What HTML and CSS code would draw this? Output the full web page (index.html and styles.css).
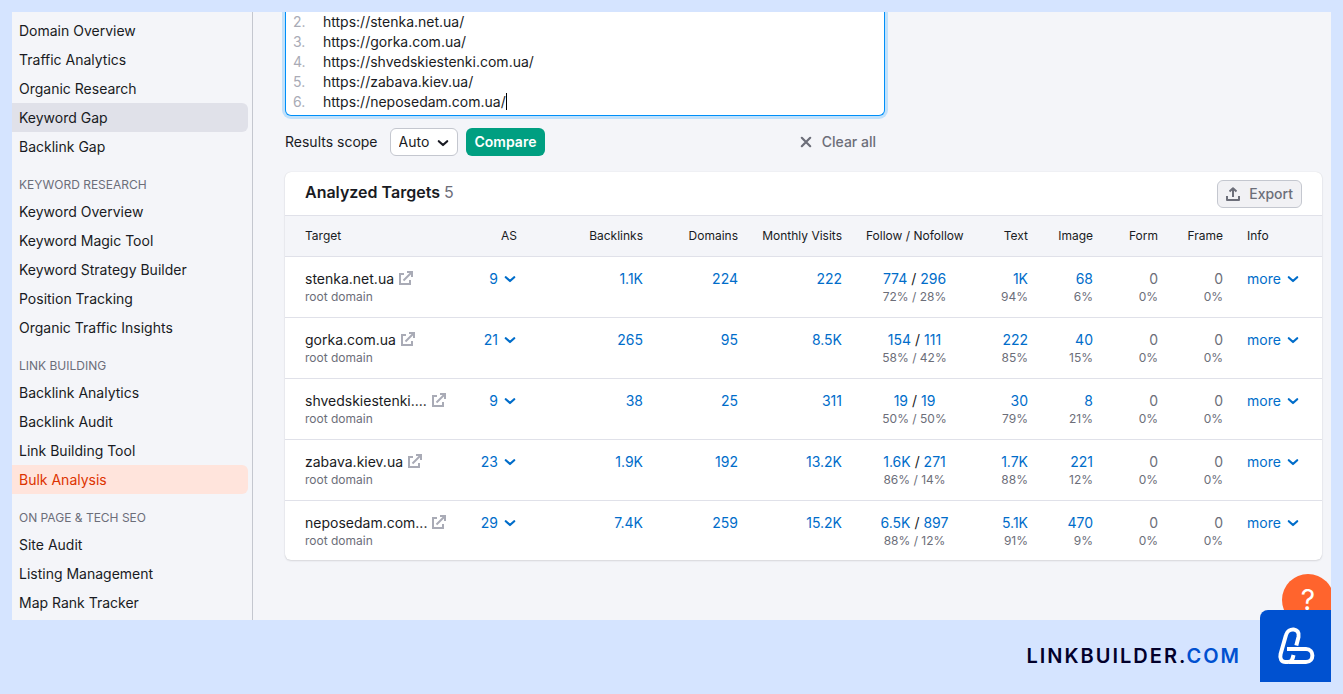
FILE: index.html
```html
<!DOCTYPE html>
<html lang="en">
<head>
  <meta charset="UTF-8" />
  <meta name="viewport" content="width=device-width, initial-scale=1.0"/>
  <title>Bulk Analysis</title>
  <link rel="stylesheet" href="styles.css">
</head>
<body>

  <!-- shared icons -->
  <svg class="sprite" aria-hidden="true">
    <symbol id="chevron" viewBox="0 0 12 8">
      <path d="M1.8 2.2 6 6 10.2 2.2" fill="none" stroke="currentColor" stroke-width="2.2" stroke-linecap="round" stroke-linejoin="round"/>
    </symbol>
    <symbol id="external" viewBox="0 0 14 14">
      <path d="M5 3H1V13h10V9" fill="none" stroke="currentColor" stroke-width="2"/>
      <path d="M4.5 9.500 12 2" fill="none" stroke="currentColor" stroke-width="2"/>
      <path d="M8 1H13V6" fill="none" stroke="currentColor" stroke-width="2"/>
    </symbol>
  </svg>

  <div class="frame">
    <nav class="sidebar">
      <ul>
        <li><a href="#">Domain Overview</a></li>
        <li><a href="#">Traffic Analytics</a></li>
        <li><a href="#">Organic Research</a></li>
        <li><a href="#" class="hovered">Keyword Gap</a></li>
        <li><a href="#">Backlink Gap</a></li>
      </ul>
      <h3>KEYWORD RESEARCH</h3>
      <ul>
        <li><a href="#">Keyword Overview</a></li>
        <li><a href="#">Keyword Magic Tool</a></li>
        <li><a href="#">Keyword Strategy Builder</a></li>
        <li><a href="#">Position Tracking</a></li>
        <li><a href="#">Organic Traffic Insights</a></li>
      </ul>
      <h3>LINK BUILDING</h3>
      <ul>
        <li><a href="#">Backlink Analytics</a></li>
        <li><a href="#">Backlink Audit</a></li>
        <li><a href="#">Link Building Tool</a></li>
        <li><a href="#" class="active">Bulk Analysis</a></li>
      </ul>
      <h3>ON PAGE &amp; TECH SEO</h3>
      <ul>
        <li><a href="#">Site Audit</a></li>
        <li><a href="#">Listing Management</a></li>
        <li><a href="#">Map Rank Tracker</a></li>
      </ul>
    </nav>

    <main class="content">
      <form class="targets-form" onsubmit="return false">
        <div class="url-box">
          <div class="line-numbers"><span>2.</span><span>3.</span><span>4.</span><span>5.</span><span>6.</span></div>
          <textarea rows="5" aria-label="Targets" spellcheck="false">https://stenka.net.ua/
https://gorka.com.ua/
https://shvedskiestenki.com.ua/
https://zabava.kiev.ua/
https://neposedam.com.ua/</textarea>
          <span class="caret"></span>
        </div>
        <div class="controls">
          <label for="scope">Results scope</label>
          <div class="select-wrap">
            <select id="scope"><option>Auto</option></select>
            <svg class="chevron"><use href="#chevron"/></svg>
          </div>
          <button class="compare-btn" type="submit">Compare</button>
          <button class="clear-btn" type="reset">
            <svg width="12" height="12" viewBox="0 0 12 12"><path d="M1.8 1.8l8.400 8.400M10.200 1.800l-8.400 8.400" stroke="currentColor" stroke-width="2.2" stroke-linecap="round"/></svg>
            Clear all
          </button>
        </div>
      </form>

      <section class="card">
        <div class="card-header">
          <h2>Analyzed Targets <span>5</span></h2>
          <button class="export-btn">
            <svg width="14" height="14" viewBox="0 0 14 14" fill="none" stroke="currentColor" stroke-width="2" stroke-linejoin="round"><path d="M1 9v4h12V9M7 10V1.5M3.5 4.5 7 1.2l3.5 3.3"/></svg>
            Export
          </button>
        </div>
        <table>
          <colgroup>
            <col><col class="c-as"><col class="c-backlinks"><col class="c-domains"><col class="c-visits"><col class="c-follow">
            <col class="c-type"><col class="c-type"><col class="c-type"><col class="c-type"><col class="c-info">
          </colgroup>
          <thead>
            <tr>
              <th class="left">Target</th><th>AS</th><th>Backlinks</th><th>Domains</th><th>Monthly Visits</th>
              <th class="center">Follow / Nofollow</th><th>Text</th><th>Image</th><th>Form</th><th>Frame</th><th class="left">Info</th>
            </tr>
          </thead>
          <tbody id="rows"></tbody>
        </table>
      </section>
    </main>

    <button class="help-btn" aria-label="Help">?</button>
  </div>

  <footer>
    <p class="brand">LINKBUILDER.<span class="com">COM</span></p>
    <div class="logo">
      <svg width="71" height="72" viewBox="0 0 71 72" fill="none" stroke="#fff" stroke-width="4" stroke-linejoin="round">
        <path d="M36.300 35.500 38.500 27C40.500 17.500 28 17 26 25L20.600 44C19.500 48.500 21.500 52 25.500 52H28C31.500 52 32.500 50 33.500 45"/>
        <path d="M27 39H46C54.500 39 54.500 52 46 52H29"/>
      </svg>
    </div>
  </footer>

  <script>
    // name, AS, backlinks, domains, visits, follow, nofollow, follow %, nofollow %, text, text %, image, image %
    const targets = [
      ['stenka.net.ua', '9', '1.1K', '224', '222', '774', '296', '72%', '28%', '1K', '94%', '68', '6%'],
      ['gorka.com.ua', '21', '265', '95', '8.5K', '154', '111', '58%', '42%', '222', '85%', '40', '15%'],
      ['shvedskiestenki....', '9', '38', '25', '311', '19', '19', '50%', '50%', '30', '79%', '8', '21%'],
      ['zabava.kiev.ua', '23', '1.9K', '192', '13.2K', '1.6K', '271', '86%', '14%', '1.7K', '88%', '221', '12%'],
      ['neposedam.com...', '29', '7.4K', '259', '15.2K', '6.5K', '897', '88%', '12%', '5.1K', '91%', '470', '9%']
    ];
    const chevron = '<svg class="chevron"><use href="#chevron"/></svg>';
    const link = text => `<a href="#">${text}</a>`;

    document.getElementById('rows').innerHTML = targets.map(t => `
      <tr>
        <td class="left">
          <div class="target"><span>${t[0]}</span><a href="#" class="ext" aria-label="Open site"><svg><use href="#external"/></svg></a></div>
          <small>root domain</small>
        </td>
        <td><button class="toggle">${t[1]}${chevron}</button></td>
        <td>${link(t[2])}</td>
        <td>${link(t[3])}</td>
        <td>${link(t[4])}</td>
        <td class="center">${link(t[5])} / ${link(t[6])}<small>${t[7]} / ${t[8]}</small></td>
        <td>${link(t[9])}<small>${t[10]}</small></td>
        <td>${link(t[11])}<small>${t[12]}</small></td>
        <td class="muted">0<small>0%</small></td>
        <td class="muted">0<small>0%</small></td>
        <td class="left"><button class="toggle">more${chevron}</button></td>
      </tr>`).join('');
  </script>
</body>
</html>
```
FILE: styles.css
```css
:root {
  --page: #d5e4ff;
  --panel: #f4f5f9;
  --text: #191b23;
  --muted: #6c6e79;
  --faint: #a9abb6;
  --line: #e0e1e9;
  --blue: #006dca;
  --brand-blue: #0051d0;
}

* {
  box-sizing: border-box;
  margin: 0;
  padding: 0;
}

body {
  font-family: Inter, "Liberation Sans", sans-serif;
  font-size: 14px;
  line-height: 20px;
  color: var(--text);
  background: var(--page);
  padding: 12px 12px 0;
}

button,
select,
textarea {
  font: inherit;
  color: inherit;
}

button {
  border: none;
  background: none;
  cursor: pointer;
}

a {
  color: var(--blue);
  text-decoration: none;
}

ul {
  list-style: none;
}

.sprite {
  position: absolute;
  width: 0;
  height: 0;
}

.chevron {
  width: 12px;
  height: 8px;
}

.frame {
  position: relative;
  display: flex;
  overflow: hidden;
  background: var(--panel);
}

/* sidebar */
.sidebar {
  flex: 0 0 241px;
  padding: 4px 4px 3px 0;
  border-right: 1px solid #c4c7cf;
}

.sidebar a {
  display: block;
  padding: 5px 7px 4px;
  color: var(--text);
  border-radius: 0 6px 6px 0;
}

.sidebar a.hovered {
  background: #e0e1e9;
}

.sidebar a.active {
  background: #ffe4dc;
  color: #dd3300;
}

.sidebar h3 {
  padding: 16px 7px 4px;
  font-size: 12px;
  line-height: 16px;
  font-weight: 400;
  color: var(--muted);
}

/* targets form */
.content {
  flex: 1;
  min-width: 0;
  padding: 0 9px 0 32px;
}

.targets-form {
  max-width: 600px;
}

.url-box {
  position: relative;
  display: flex;
  padding: 0 7px 3px;
  background: #fff;
  border: 1px solid #008ff8;
  border-top: none;
  border-radius: 0 0 6px 6px;
  box-shadow: 0 0 0 3px #c1e1fb;
}

.line-numbers {
  display: flex;
  flex-direction: column;
  width: 30px;
  color: var(--faint);
}

.url-box textarea {
  display: block;
  flex: 1;
  border: none;
  outline: none;
  resize: none;
  overflow: hidden;
}

.caret {
  position: absolute;
  left: 220px;
  bottom: 5px;
  width: 1px;
  height: 17px;
  background: #000;
}

.controls {
  display: flex;
  align-items: center;
  gap: 8px;
  padding: 12px 0 16px;
}

.controls label {
  margin-right: 4px;
}

.select-wrap {
  position: relative;
}

.select-wrap select {
  appearance: none;
  display: block;
  width: 68px;
  height: 28px;
  padding: 0 8px;
  background: #fff;
  border: 1px solid #c4c7cf;
  border-radius: 6px;
}

.select-wrap .chevron {
  position: absolute;
  right: 9px;
  top: 11px;
  pointer-events: none;
}

.compare-btn {
  height: 28px;
  padding: 0 9px;
  border-radius: 6px;
  background: #009f81;
  color: #fff;
  font-weight: 600;
}

.clear-btn {
  display: flex;
  align-items: center;
  gap: 10px;
  margin-left: auto;
  padding-right: 9px;
  font-weight: 500;
  color: var(--muted);
}

/* results */
.card {
  background: #fff;
  border-radius: 6px;
  box-shadow: 0 0 1px rgba(25, 27, 35, 0.16), 0 1px 2px rgba(25, 27, 35, 0.12);
  overflow: hidden;
}

.card-header {
  display: flex;
  align-items: flex-start;
  justify-content: space-between;
  padding: 8px 20px 7px;
  border-bottom: 1px solid var(--line);
}

.card-header h2 {
  font-size: 16px;
  line-height: 24px;
  font-weight: 600;
}

.card-header h2 span {
  font-weight: 400;
  color: var(--muted);
}

.export-btn {
  display: flex;
  align-items: center;
  gap: 9px;
  height: 28px;
  padding: 0 8px;
  background: #f1f1f4;
  border: 1px solid #c4c7cf;
  border-radius: 6px;
  font-weight: 500;
  color: var(--muted);
}

table {
  width: 100%;
  table-layout: fixed;
  border-collapse: separate;
  border-spacing: 0;
}

.c-as { width: 69px; }
.c-backlinks { width: 126px; }
.c-domains { width: 95px; }
.c-visits { width: 104px; }
.c-follow { width: 121px; }
.c-type { width: 65px; }
.c-info { width: 87px; }

th,
td {
  padding: 12px;
  text-align: right;
  vertical-align: top;
  white-space: nowrap;
  border-bottom: 1px solid var(--line);
}

th {
  background: var(--panel);
  font-size: 12px;
  line-height: 16px;
  font-weight: 400;
}

th:first-child,
td:first-child {
  padding-left: 20px;
}

tbody tr:last-child td {
  padding-bottom: 11px;
  border-bottom: none;
}

.left {
  text-align: left;
}

.center {
  text-align: center;
}

.muted {
  color: var(--muted);
}

td small {
  display: block;
  font-size: 12px;
  line-height: 16px;
  color: var(--muted);
}

.target {
  display: flex;
  align-items: center;
  gap: 5px;
}

.ext {
  color: var(--faint);
}

.ext svg {
  display: block;
  width: 14px;
  height: 14px;
  margin-bottom: 2px;
}

.toggle {
  display: inline-flex;
  align-items: center;
  gap: 6px;
  padding-right: 1px;
  color: var(--blue);
}

.help-btn {
  position: absolute;
  right: -3px;
  bottom: -6px;
  width: 52px;
  height: 52px;
  border-radius: 50%;
  background: #ff642d;
  color: #fff;
  font-size: 28px;
}

/* brand strip */
footer {
  display: flex;
  align-items: center;
  justify-content: flex-end;
  gap: 19px;
}

.brand {
  margin-top: 10px;
  font-size: 20px;
  line-height: 24px;
  font-weight: 600;
  letter-spacing: 2px;
  color: #02002b;
}

.brand .com {
  color: var(--brand-blue);
}

.logo {
  position: relative;
  margin-top: -10px;
  width: 71px;
  height: 72px;
  background: var(--brand-blue);
  border-radius: 8px 0 0 0;
}
```
